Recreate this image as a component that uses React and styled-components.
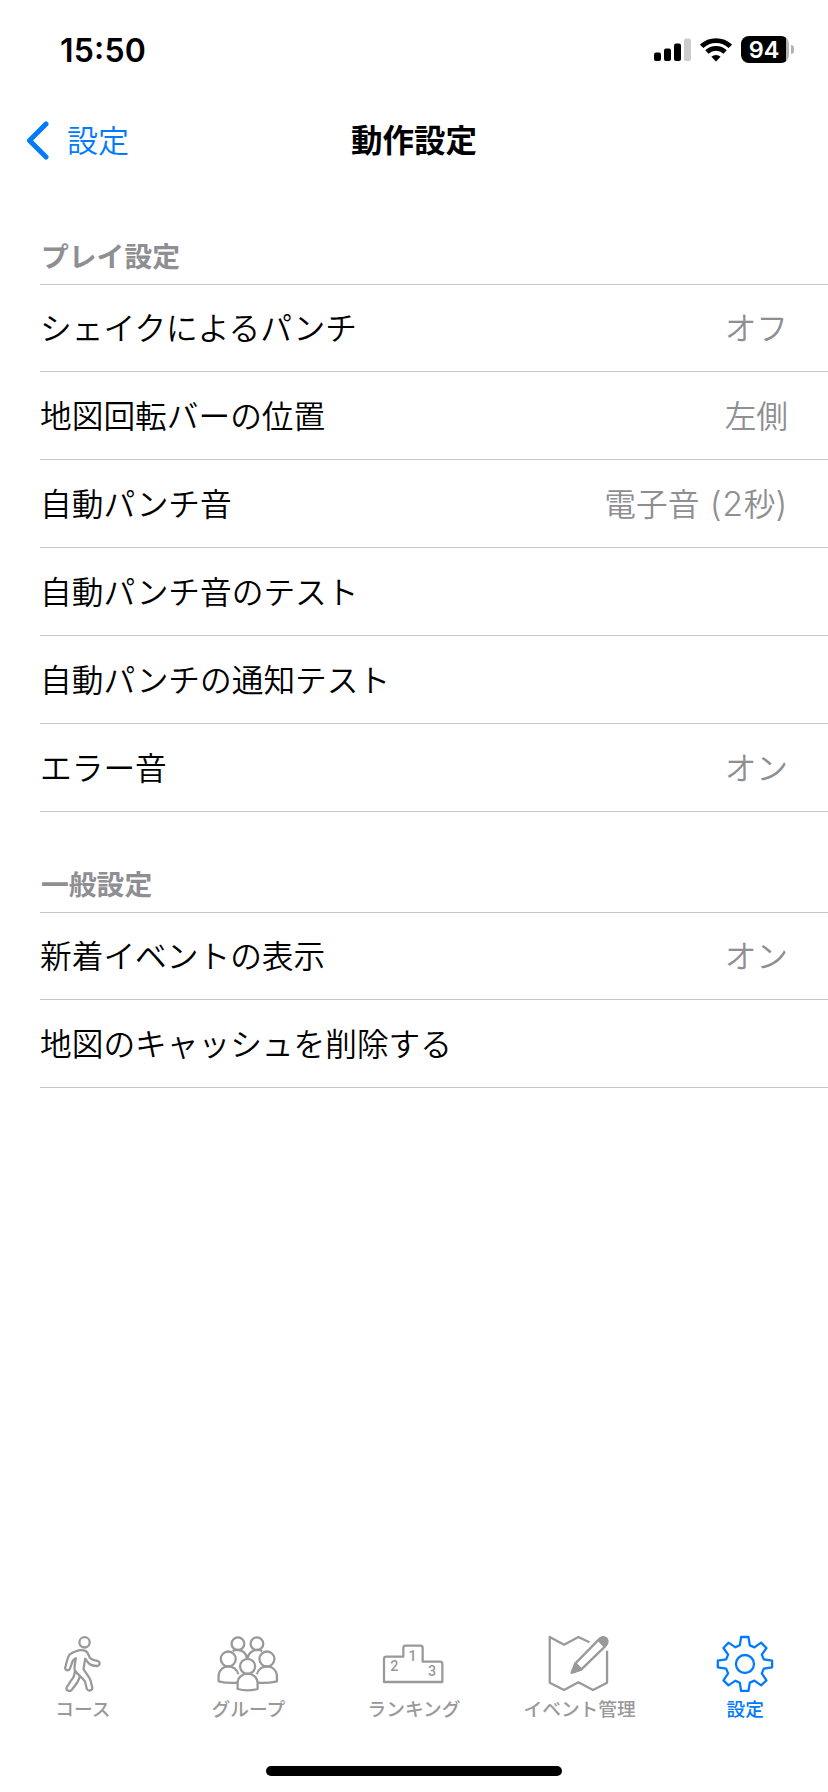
import React from 'react';
import styled, { createGlobalStyle } from 'styled-components';

const playItems = [
  { label: 'シェイクによるパンチ', value: 'オフ' },
  { label: '地図回転バーの位置', value: '左側' },
  { label: '自動パンチ音', value: '電子音 (2秒)' },
  { label: '自動パンチ音のテスト' },
  { label: '自動パンチの通知テスト' },
  { label: 'エラー音', value: 'オン' },
];

const generalItems = [
  { label: '新着イベントの表示', value: 'オン' },
  { label: '地図のキャッシュを削除する' },
];

const SignalIcon = () => (
  <svg width='37' height='24' viewBox='0 0 37 24'>
    <rect x='0' y='14.5' width='7' height='8.5' rx='2' />
    <rect x='10' y='10.5' width='7' height='12.5' rx='2' />
    <rect x='20' y='5.5' width='7' height='17.5' rx='2' />
    <rect x='30' y='0.5' width='7' height='22.5' rx='2' fill='#ccc' />
  </svg>
);

const WifiIcon = () => (
  <svg width='32' height='24' viewBox='0 0 32 24'>
    <g fill='none' stroke='#000' strokeWidth='4.8'>
      <path d='M1.6 8.4a20.6 20.6 0 0 1 28.8 0' />
      <path d='M6.9 14a13 13 0 0 1 18.2 0' />
    </g>
    <path d='M16 23.5l-4.6-4.7a6.7 6.7 0 0 1 9.2 0z' />
  </svg>
);

const BackIcon = () => (
  <svg width='23' height='40' viewBox='0 0 23 40'>
    <path d='M20 3L3.5 19.5L20 36' fill='none' stroke='#007aff' strokeWidth='5' strokeLinecap='round' strokeLinejoin='round' />
  </svg>
);

const WalkIcon = () => (
  <svg viewBox='59.4 30 198 186'>
    <circle cx='163' cy='67' r='15.5' />
    <path d='M140 93C145 90 158 90 164 92C172 94 174 103 179 113C184 119 194 121 203 123C211 126 209 137 202 138C190 138 176 133 171 124L165 116L160 147C164 156 176 168 181 181L186 202C187 212 175 215 170 207L164 184C157 172 141 163 134 151C131 145 134 132 137 115C128 119 126 123 124 133L119 146C115 154 104 151 105 143C109 128 112 111 119 103C126 97 133 95 140 93Z' />
    <path d='M134 152C134 166 128 176 121 184L110 201C105 211 118 217 125 209C135 197 147 183 149 168' />
  </svg>
);

const GroupIcon = () => (
  <svg viewBox='556.2 30 198 186'>
    <circle cx='625' cy='71' r='19' />
    <circle cx='682' cy='71' r='19' />
    <path d='M609 93Q625 85 641 95Q650 102 653 117Q656 102 666 95Q682 85 698 93' />
    <circle cx='596' cy='117' r='22.5' />
    <circle cx='712' cy='117' r='22.5' />
    <circle cx='654' cy='139' r='22.5' />
    <path d='M624 188Q595 191 567 184V165C569 148 583 139 596 139C609 139 623 148 626 163' />
    <path d='M683 188Q712 191 742 184V165C739 148 726 139 712 139C699 139 685 148 682 163' />
    <path d='M624 207V188C625 172 639 161 654 161C669 161 683 172 684 188V207Q654 215 624 207Z' />
  </svg>
);

const RankingIcon = () => (
  <svg viewBox='93 30 198 186'>
    <path d='M102 186V117Q102 110 109 110H160V84Q160 77 167 77H211Q218 77 218 84V125H270Q277 125 277 132V186Z' />
    <text x='188' y='122'>1</text>
    <text x='133' y='154'>2</text>
    <text x='246' y='169'>3</text>
  </svg>
);

const MapIcon = () => (
  <svg viewBox='589.8 30 198 186'>
    <path d='M717 67L684 51L641 74L598 51V188L641 210L684 187L728 210L770 188V92' />
    <path d='M675 130L742 62Q757 46 768 56Q776 66 761 82L693 148L664 158Z' />
    <path d='M675 130L664 158L693 148ZM744 60Q757 46 768 56Q776 66 763 80Z' fill='#999' />
  </svg>
);

const GearIcon = () => (
  <svg viewBox='276.6 30 198 186'>
    <circle cx='375.5' cy='132' r='27' />
    <path d='M364 51H386L390 76L404 82L424 68L440 84L426 104L432 118L457 122V142L432 146L426 160L440 181L424 196L404 182L390 188L386 213H364L360 188L347 182L326 196L311 181L325 160L319 146L294 142V122L319 118L325 104L311 84L326 68L347 82L360 76Z' />
  </svg>
);

const tabs = [
  { label: 'コース', Icon: WalkIcon },
  { label: 'グループ', Icon: GroupIcon },
  { label: 'ランキング', Icon: RankingIcon },
  { label: 'イベント管理', Icon: MapIcon },
  { label: '設定', Icon: GearIcon, active: true },
];

// latin runs are set slightly larger than the kana and kanji around them
const renderValue = (value) =>
  value
    .split(/([ -~]+)/)
    .filter(Boolean)
    .map((part, i) => (/^[ -~]/.test(part) ? <Latin key={i}>{part}</Latin> : part));

const SettingSection = ({ title, items }) => (
  <section>
    <SectionTitle>{title}</SectionTitle>
    <SettingList>
      {items.map(({ label, value }) => (
        <SettingItem key={label}>
          <span>{label}</span>
          {value && <SettingValue>{renderValue(value)}</SettingValue>}
        </SettingItem>
      ))}
    </SettingList>
  </section>
);

const App = () => {
  return (
    <>
      <GlobalStyle />
      <Screen>
        <StatusBar>
          <Clock>15:50</Clock>
          <StatusIcons>
            <SignalIcon />
            <WifiIcon />
            <Battery>
              <BatteryLevel>94</BatteryLevel>
              <BatteryCap />
            </Battery>
          </StatusIcons>
        </StatusBar>
        <NavBar>
          <BackButton>
            <BackIcon />
            設定
          </BackButton>
          <NavTitle>動作設定</NavTitle>
        </NavBar>
        <Content>
          <SettingSection title='プレイ設定' items={playItems} />
          <SettingSection title='一般設定' items={generalItems} />
        </Content>
        <TabBar>
          {tabs.map(({ label, Icon, active }) => (
            <Tab key={label} $active={active}>
              <Icon />
              {label}
            </Tab>
          ))}
        </TabBar>
        <HomeArea>
          <HomeIndicator />
        </HomeArea>
      </Screen>
    </>
  );
};

const GlobalStyle = createGlobalStyle`
  * {
    box-sizing: border-box;
  }
  body {
    margin: 0;
    background: #fff;
    font-family: Inter, 'Noto Sans CJK JP', sans-serif;
  }
`;

const Screen = styled.div`
  display: flex;
  flex-direction: column;
  width: 828px;
  height: 1792px;
  color: #000;
  overflow: hidden;
`;

const StatusBar = styled.header`
  display: flex;
  align-items: center;
  justify-content: space-between;
  height: 96px;
  padding: 3px 34px 0 60px;
`;

const Clock = styled.div`
  font-size: 32px;
  font-weight: 600;
  font-feature-settings: 'case';
  line-height: 38px;
  letter-spacing: 0.2px;
  padding-top: 2px;
`;

const StatusIcons = styled.div`
  display: flex;
  align-items: center;
  gap: 9px;
`;

const Battery = styled.div`
  display: flex;
  align-items: center;
  gap: 2px;
`;

const BatteryLevel = styled.div`
  width: 48px;
  height: 27px;
  border-radius: 8px;
  background: linear-gradient(90deg, #000 45px, #b3b3b3 45px);
  color: #fff;
  font-size: 23.5px;
  font-weight: 600;
  line-height: 27px;
  text-align: center;
  padding-right: 2px;
`;

const BatteryCap = styled.div`
  width: 3px;
  height: 9px;
  border-radius: 0 4px 4px 0;
  background: #b3b3b3;
`;

const NavBar = styled.nav`
  display: grid;
  grid-template-columns: 1fr auto 1fr;
  align-items: center;
  height: 88px;
  padding: 1px 26px 0;
`;

const BackButton = styled.div`
  display: flex;
  align-items: center;
  gap: 18px;
  color: #007aff;
  font-size: 31px;
  font-weight: 350;
  line-height: 40px;
`;

const NavTitle = styled.div`
  font-size: 31.5px;
  font-weight: 700;
  line-height: 40px;
`;

const Content = styled.main`
  flex: 1;
  padding-left: 40px;
`;

const SectionTitle = styled.h2`
  display: flex;
  align-items: flex-end;
  height: 100px;
  margin: 0;
  padding: 0 0 7px 1px;
  color: #8e8e93;
  font-size: 27.8px;
  font-weight: 700;
  line-height: 40px;
`;

const SettingList = styled.ul`
  margin: 0;
  padding: 0;
  list-style: none;
  border-top: 1px solid #c6c6c8;
`;

const SettingItem = styled.li`
  display: flex;
  align-items: center;
  justify-content: space-between;
  height: 88px;
  padding: 2px 40px 0 0;
  border-bottom: 1px solid #c6c6c8;
  font-size: 31.7px;
  font-weight: 350;
  line-height: 40px;
  &:first-child {
    height: 87px;
  }
`;

const SettingValue = styled.span`
  color: #8e8e93;
`;

const Latin = styled.span`
  font-size: 34px;
  letter-spacing: 0.7px;
`;

const TabBar = styled.nav`
  display: grid;
  grid-template-columns: repeat(5, 1fr);
  height: 96px;
`;

const Tab = styled.div`
  display: flex;
  flex-direction: column;
  align-items: center;
  color: ${({ $active }) => ($active ? '#007aff' : '#999')};
  font-size: 18.7px;
  font-weight: 500;
  line-height: 28px;
  svg {
    width: 66px;
    height: 62px;
    margin-bottom: 4px;
    fill: none;
    stroke: currentColor;
    stroke-width: 6.8;
    stroke-linejoin: round;
  }
  text {
    fill: currentColor;
    stroke: none;
    font-size: 43px;
    font-weight: 500;
    font-family: Roboto, sans-serif;
    text-anchor: middle;
  }
`;

const HomeArea = styled.footer`
  display: flex;
  align-items: flex-end;
  justify-content: center;
  height: 66px;
  padding-bottom: 16px;
`;

const HomeIndicator = styled.div`
  width: 296px;
  height: 10px;
  border-radius: 5px;
  background: #000;
`;

export default App;
